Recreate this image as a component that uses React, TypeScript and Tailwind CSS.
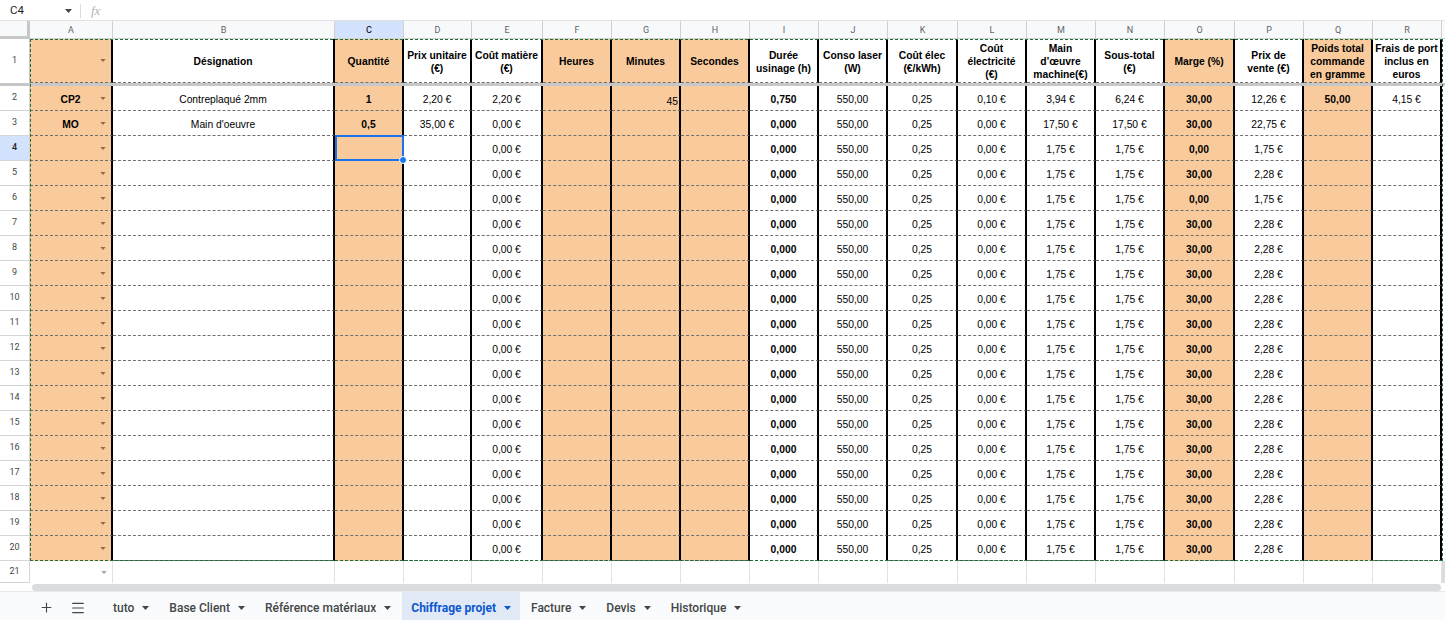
import { Plus, Menu } from "lucide-react";

type Col = { k: string; w: string; o?: boolean; b?: boolean };

const cols: Col[] = [
  { k: "A", w: "w-[83px]", o: true, b: true },
  { k: "B", w: "w-[222px]" },
  { k: "C", w: "w-[69px]", o: true, b: true },
  { k: "D", w: "w-[68px]" },
  { k: "E", w: "w-[71px]" },
  { k: "F", w: "w-[69px]", o: true },
  { k: "G", w: "w-[69px]", o: true },
  { k: "H", w: "w-[69px]", o: true },
  { k: "I", w: "w-[69px]", b: true },
  { k: "J", w: "w-[69px]" },
  { k: "K", w: "w-[70px]" },
  { k: "L", w: "w-[69px]" },
  { k: "M", w: "w-[69px]" },
  { k: "N", w: "w-[69px]" },
  { k: "O", w: "w-[70px]", o: true, b: true },
  { k: "P", w: "w-[69px]" },
  { k: "Q", w: "w-[69px]", o: true, b: true },
  { k: "R", w: "w-[69px]" },
];

const headers: string[][] = [
  [],
  ["Désignation"],
  ["Quantité"],
  ["Prix unitaire", "(€)"],
  ["Coût matière", "(€)"],
  ["Heures"],
  ["Minutes"],
  ["Secondes"],
  ["Durée", "usinage (h)"],
  ["Conso laser", "(W)"],
  ["Coût élec", "(€/kWh)"],
  ["Coût", "électricité", "(€)"],
  ["Main", "d’œuvre", "machine(€)"],
  ["Sous-total", "(€)"],
  ["Marge (%)"],
  ["Prix de", "vente (€)"],
  ["Poids total", "commande", "en gramme"],
  ["Frais de port", "inclus en", "euros"],
];

const rows: string[][] = [
  ["CP2", "Contreplaqué 2mm", "1", "2,20 €", "2,20 €", "", "45", "", "0,750", "550,00", "0,25", "0,10 €", "3,94 €", "6,24 €", "30,00", "12,26 €", "50,00", "4,15 €"],
  ["MO", "Main d'oeuvre", "0,5", "35,00 €", "0,00 €", "", "", "", "0,000", "550,00", "0,25", "0,00 €", "17,50 €", "17,50 €", "30,00", "22,75 €", "", ""],
];
for (let r = 4; r <= 20; r++) {
  const zero = r === 4 || r === 6;
  rows.push(["", "", "", "", "0,00 €", "", "", "", "0,000", "550,00", "0,25", "0,00 €", "1,75 €", "1,75 €", zero ? "0,00" : "30,00", zero ? "1,75 €" : "2,28 €", "", ""]);
}

const tabs = ["tuto", "Base Client", "Référence matériaux", "Chiffrage projet", "Facture", "Devis", "Historique"];

function Caret({ color, w = 7, h = 4 }: { color: string; w?: number; h?: number }) {
  return (
    <svg width={w} height={h} viewBox="0 0 7 4" className="shrink-0">
      <path d="M0 0h7L3.5 4z" fill={color} />
    </svg>
  );
}

const cellBase =
  "shrink-0 relative flex items-center justify-center text-[10.3px] text-black border-solid border-r-2 border-r-black border-b border-b-[#6f6f6f] [border-bottom-style:dashed]";

export default function App() {
  return (
    <div className="w-[1445px] h-[620px] overflow-hidden bg-white flex flex-col font-['Liberation_Sans',Arial,sans-serif]">
      {/* formula bar */}
      <div className="h-[21px] shrink-0 flex items-center pt-[2px] border-b border-[#e1e1e1] font-['Roboto',sans-serif]">
        <span className="pl-[10px] w-[65px] text-[11.5px] text-[#1f1f1f]">C4</span>
        <Caret color="#444746" />
        <div className="ml-[8px] w-px h-[14px] bg-[#dadce0]" />
        <span className="ml-[10px] italic text-[13px] text-[#b4b4b4] font-['Liberation_Serif',serif]">fx</span>
      </div>

      {/* column letters */}
      <div className="h-[18px] shrink-0 flex font-['Roboto',sans-serif]">
        <div className="w-[30px] shrink-0 bg-[#f8f9fa] border-r-[3px] border-b-[3px] border-[#c7c7c7]" />
        {cols.map((c) => (
          <div
            key={c.k}
            className={`${c.w} shrink-0 flex items-center justify-center pt-[3px] text-[9px] border-r border-b border-[#d0d0d0] ${
              c.k === "C" ? "bg-[#d3e3fd] text-[#1f1f1f] font-medium" : "bg-[#f8f9fa] text-[#5f6368]"
            }`}
          >
            {c.k}
          </div>
        ))}
        <div className="flex-1 border-b border-[#d0d0d0] bg-[#f8f9fa]" />
      </div>

      {/* rows 1-20 */}
      <div className="relative shrink-0">
        <div className="h-[44px] flex">
          <div className="w-[30px] shrink-0 flex items-center justify-center text-[9px] text-[#444746] border-r border-[#c7c7c7] font-['Roboto',sans-serif]">
            1
          </div>
          {cols.map((c, i) => (
            <div
              key={c.k}
              className={`${c.w} ${cellBase} flex-col pt-[2px] font-bold leading-[13px] ${c.o ? "bg-[#f9cb9c]" : "bg-white"}`}
            >
              {headers[i].map((l) => (
                <span key={l} className="whitespace-nowrap">
                  {l}
                </span>
              ))}
              {i === 0 && (
                <span className="absolute right-[5px] top-[20px] flex">
                  <Caret color="#9a6a3e" w={6} h={3} />
                </span>
              )}
            </div>
          ))}
        </div>
        <div className="h-[3px] bg-[#c7c7c7]" />

        {rows.map((row, ri) => {
          const rn = ri + 2;
          return (
            <div key={rn} className="h-[25px] flex">
              <div
                className={`w-[30px] shrink-0 flex items-center justify-center text-[9px] border-r border-b border-[#d5d5d5] font-['Roboto',sans-serif] ${
                  rn === 4 ? "bg-[#d3e3fd] text-[#1f1f1f] font-medium" : "text-[#444746]"
                }`}
              >
                {rn}
              </div>
              {cols.map((c, i) => (
                <div
                  key={c.k}
                  className={`${c.w} ${cellBase} ${c.o ? "bg-[#f9cb9c]" : "bg-white"} ${c.b ? "font-bold" : ""} ${
                    c.k === "G" && row[i] ? "items-end justify-end pr-[1px] pb-[1px]" : "pt-[3px]"
                  }`}
                >
                  {row[i]}
                  {i === 0 && (
                    <span className="absolute right-[5px] top-[11px] flex">
                      <Caret color="#9a6a3e" w={6} h={3} />
                    </span>
                  )}
                  {i === 2 && rn === 4 && (
                    <div className="absolute left-0 top-[-1px] right-[-2px] bottom-[-1px] border-2 border-[#1a73e8] z-10">
                      <div className="absolute right-[-5px] bottom-[-5px] w-[8px] h-[8px] rounded-full bg-[#1a73e8] border border-white" />
                    </div>
                  )}
                </div>
              ))}
            </div>
          );
        })}

        {/* copy selection marching ants */}
        <div className="absolute top-0 bottom-0 left-[30px] w-[1413px] border border-dashed border-[#1e6b3a] pointer-events-none z-20" />
      </div>

      {/* row 21 */}
      <div className="h-[22px] shrink-0 flex">
        <div className="w-[30px] shrink-0 flex items-center justify-center text-[9px] text-[#444746] border-r border-b border-[#d5d5d5] font-['Roboto',sans-serif]">
          21
        </div>
        {cols.map((c, i) => (
          <div key={c.k} className={`${c.w} shrink-0 relative border-r border-[#e2e2e2]`}>
            {i === 0 && (
              <span className="absolute right-[5px] top-[10px] flex">
                <Caret color="#9aa0a6" w={6} h={3} />
              </span>
            )}
          </div>
        ))}
        <div className="flex-1 bg-[#dadce0]" />
      </div>

      {/* horizontal scrollbar */}
      <div className="h-[9px] shrink-0 flex pl-[32px] pr-[4px] pt-[1px] border-b border-[#e8e8e8]">
        <div className="flex-1 h-[7px] rounded-full bg-[#dadce0]" />
      </div>

      {/* sheet tabs */}
      <div className="flex-1 flex items-stretch bg-[#f9fbfd] font-['Roboto',sans-serif] text-[12px] font-medium text-[#444746]">
        <div className="w-[104px] shrink-0 flex items-center pt-[3px]">
          <Plus size={15} strokeWidth={1.8} className="ml-[39px] text-[#444746]" />
          <Menu size={16} strokeWidth={1.8} className="ml-[16px] text-[#444746]" />
        </div>
        {tabs.map((t) => {
          const active = t === "Chiffrage projet";
          return (
            <div
              key={t}
              className={`flex items-center gap-[8px] px-[9px] pt-[3px] mr-[2px] ${
                active ? "bg-[#e1e9f7] text-[#0b57d0] font-bold" : ""
              }`}
            >
              <span className="whitespace-nowrap">{t}</span>
              <Caret color={active ? "#0b57d0" : "#444746"} />
            </div>
          );
        })}
      </div>
    </div>
  );
}
